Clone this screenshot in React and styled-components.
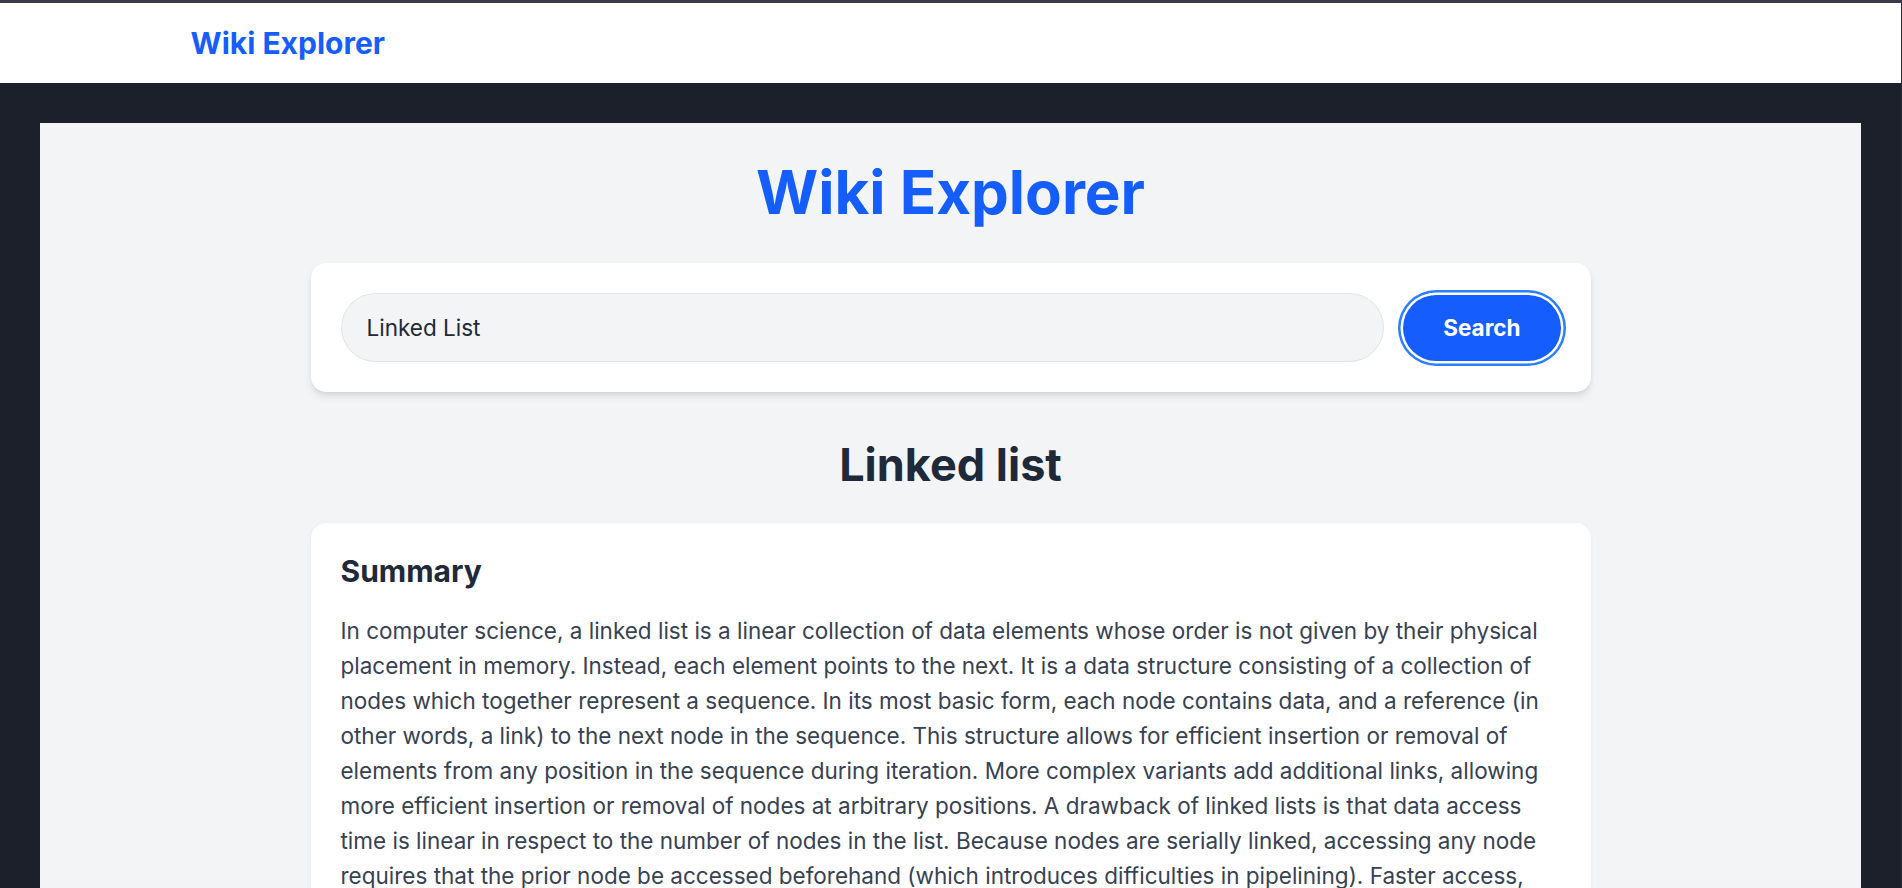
import React from "react"
import styled, { createGlobalStyle } from "styled-components"

const GlobalStyle = createGlobalStyle`
  html, body {
    margin: 0;
    padding: 0;
  }
  body {
    background: #1c202b;
    border-top: 3px solid #3b3a4a;
    font-family: Inter, "Noto Sans", "Liberation Sans", sans-serif;
    -webkit-font-smoothing: antialiased;
  }
  * {
    box-sizing: border-box;
  }
`

const summary =
  "In computer science, a linked list is a linear collection of data elements whose order is not given by their physical placement in memory. Instead, each element points to the next. It is a data structure consisting of a collection of nodes which together represent a sequence. In its most basic form, each node contains data, and a reference (in other words, a link) to the next node in the sequence. This structure allows for efficient insertion or removal of elements from any position in the sequence during iteration. More complex variants add additional links, allowing more efficient insertion or removal of nodes at arbitrary positions. A drawback of linked lists is that data access time is linear in respect to the number of nodes in the list. Because nodes are serially linked, accessing any node requires that the prior node be accessed beforehand (which introduces difficulties in pipelining). Faster access, such as random access, is not feasible. Arrays have better cache locality compared to linked lists."

function App() {
  return (
    <>
      <GlobalStyle />
      <Frame>
        <Header>
          <HeaderInner>
            <Brand>Wiki Explorer</Brand>
          </HeaderInner>
        </Header>
        <Main>
          <Title>Wiki Explorer</Title>
          <SearchCard>
            <SearchInput defaultValue="Linked List" readOnly />
            <SearchButton>Search</SearchButton>
          </SearchCard>
          <ArticleTitle>Linked list</ArticleTitle>
          <ResultCard>
            <SectionTitle>Summary</SectionTitle>
            <Paragraph>{summary}</Paragraph>
          </ResultCard>
        </Main>
      </Frame>
    </>
  )
}

export default App

const Frame = styled.div`
  min-height: calc(100vh - 3px);
  border-right: 1px solid #2a2d38;
`
const Header = styled.header`
  height: 80px;
  background: #ffffff;
`
const HeaderInner = styled.div`
  max-width: 1600px;
  height: 100%;
  margin: 0 auto;
  padding: 0 40px;
  display: flex;
  align-items: center;
`
const Brand = styled.div`
  font-size: 30px;
  font-weight: 700;
  color: #155dfc;
`
const Main = styled.main`
  margin: 40px 40px 0;
  padding: 39px 30px 60px;
  background: #f3f4f6;
  min-height: 900px;
  display: flex;
  flex-direction: column;
  align-items: center;
`
const Title = styled.h1`
  margin: 0 0 41px;
  font-size: 60px;
  line-height: 60px;
  font-weight: 700;
  color: #155dfc;
`
const Card = styled.section`
  width: 100%;
  max-width: 1280px;
  padding: 30px;
  background: #ffffff;
  border-radius: 15px;
`
const SearchCard = styled(Card)`
  display: flex;
  align-items: center;
  gap: 19px;
  box-shadow: 0 5px 8px -1px rgba(0, 0, 0, 0.1), 0 2px 5px -2px rgba(0, 0, 0, 0.1);
`
const SearchInput = styled.input`
  flex: 1;
  height: 69px;
  padding: 0 25px;
  border: 1px solid #e1e3e8;
  border-radius: 9999px;
  background: #f3f4f6;
  font-family: inherit;
  font-size: 22.5px;
  color: #1e2939;
  outline: none;
`
const SearchButton = styled.button`
  height: 66px;
  padding: 0 40px;
  border: none;
  border-radius: 9999px;
  background: #155dfc;
  color: #ffffff;
  font-family: inherit;
  font-size: 22.5px;
  font-weight: 700;
  box-shadow: 0 0 0 2.5px #ffffff, 0 0 0 5px #2b7fff;
  cursor: pointer;
`
const ArticleTitle = styled.h2`
  margin: 48px 0 33px;
  font-size: 45px;
  line-height: 50px;
  font-weight: 700;
  color: #1e2939;
`
const ResultCard = styled(Card)`
  box-shadow: 0 1px 4px rgba(0, 0, 0, 0.06);
`
const SectionTitle = styled.h3`
  margin: -2px 0 22px;
  font-size: 30px;
  line-height: 40px;
  font-weight: 650;
  color: #1e2939;
`
const Paragraph = styled.p`
  margin: 0;
  font-size: 22.5px;
  line-height: 35px;
  color: #364153;
`
